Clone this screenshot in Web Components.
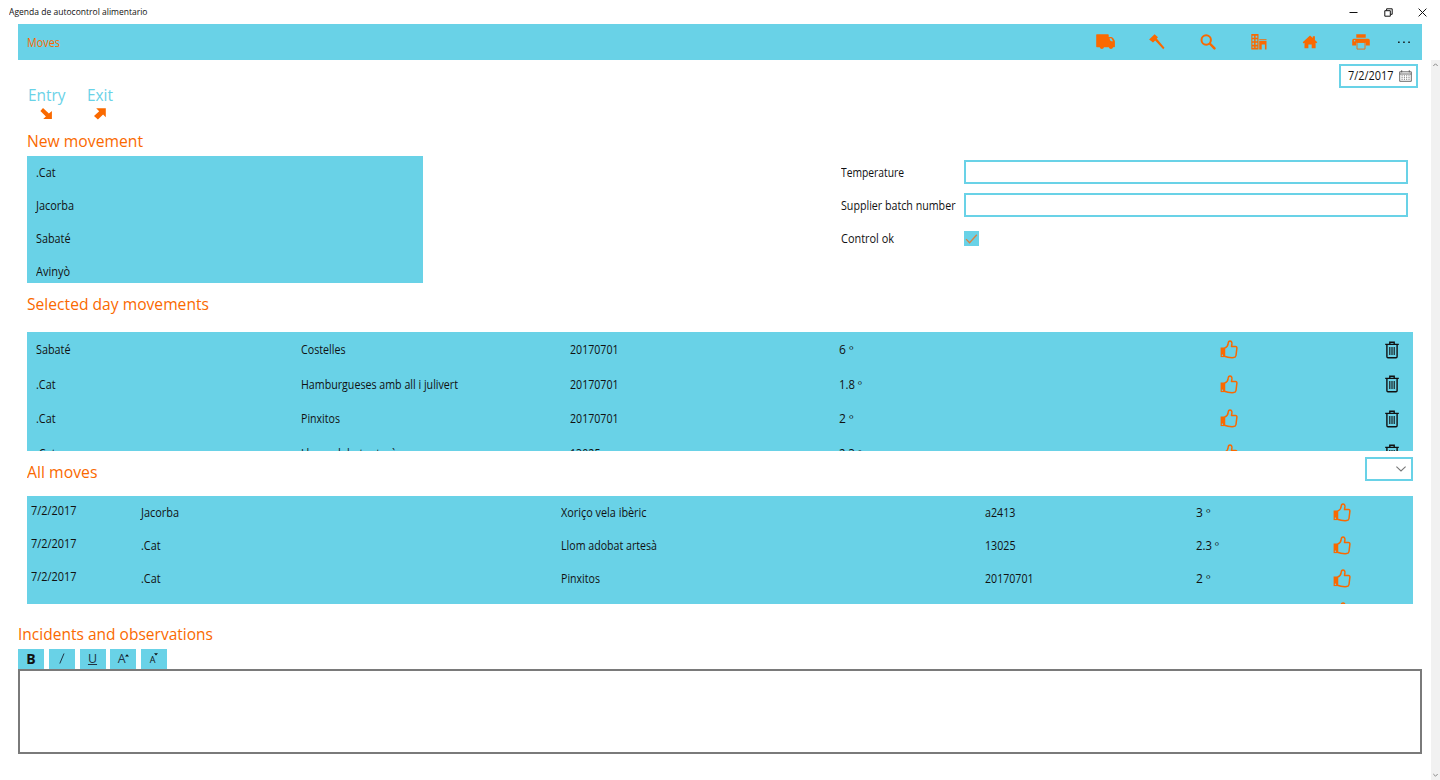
<!DOCTYPE html>
<html lang="en">
<head>
<meta charset="utf-8">
<title>Agenda de autocontrol alimentario</title>
<style>
  body {
    margin: 0;
    width: 1440px;
    height: 780px;
    overflow: hidden;
    background: #fff;
    --blue: #69d2e7;
    --orange: #fa6900;
    font-family: 'Open Sans', 'Noto Sans', sans-serif;
    font-size: 12px;
    color: #111;
  }
</style>
</head>
<body>
<moves-app></moves-app>

<script>
const ICONS = {
  truck: [19, 16, '<path fill="currentColor" d="M.8.3H12q.7 0 .7.7v2h2.6q1.3.2 2 1.3l1.2 2q.4.7.4 1.5v4.7q0 .7-.7.7h-1.1a2.2 2.2 0 0 1-4.3 0H8a2.2 2.2 0 0 1-4.3 0H.9q-.7 0-.7-.7V1Q.2.3.8.3z"/><path fill="#69d2e7" d="M13.5 4.3h1.8l1.7 2.9h-1.5q-1.2 0-1.5-1.1z"/>'],
  gavel: [16, 16, '<path fill="currentColor" d="M.1 5.6 5.6.2 9 3.2 7.7 4.6l7.8 9.1-1.3 1.5-8-8.6L4 8.6z"/>'],
  search: [16, 16, '<circle cx="6.2" cy="6" r="4.7" fill="none" stroke="currentColor" stroke-width="2"/><path stroke="currentColor" stroke-width="2.5" stroke-linecap="round" d="m10.2 10 4.3 4.4"/>'],
  building: [16, 16, '<path fill="currentColor" fill-rule="evenodd" d="M.3.1h7.2v15.5H.3zM1.4 1.8v2h1.7v-2zm3.2 0v2h1.7v-2zM1.4 5.3v2h1.7v-2zm3.2 0v2h1.7v-2zM1.4 8.8v2h1.7v-2zm3.2 0v2h1.7v-2zM1.4 12.4v1.4h1.7v-1.4zm3.2 0v1.4h1.7v-1.4zM8.2 5.2h7.3v1H8.2zM8.2 6.9h7.3v8.7h-1.6v-5h-3.2v5H8.2z"/>'],
  home: [16, 14, '<path fill="currentColor" d="m8 .6 2.8 2.5V1.3h2.1V5l2.4 2.3-1 1-.7-.5v5.5H9.7V9.6H6.4v3.7H2.5V7.8l-.8.6-1-1.1z"/>'],
  printer: [18, 16, '<path fill="currentColor" d="M4.3.3h9.4v3.5H4.3zM1.7 4.8h14.6q1.5 0 1.5 1.6v5h-4V8.7H4.2v2.7h-4v-5q0-1.6 1.5-1.6z"/><path fill="#69d2e7" stroke="currentColor" stroke-width=".9" d="M5 8.5h8v6.6H5z"/><circle cx="2.6" cy="6.8" r=".8" fill="#69d2e7"/>'],
  more: [14, 4, '<path fill="#111" d="M1.1 1.5h1.5V3H1.1zm5.1 0h1.5V3H6.2zm5.1 0h1.5V3h-1.5z"/>'],
  minimize: [9, 9, '<path stroke="#111" d="M.5 4.5h8"/>'],
  restore: [9, 9, '<path fill="none" stroke="#111" d="M.8 2.7h5.5v5.5H.8zM2.6 2.5V.8h5.6v5.5H6.5"/>'],
  close: [9, 9, '<path stroke="#111" d="m.6.6 7.8 7.8m0-7.8L.6 8.4"/>'],
  down: [15, 13, '<path fill="currentColor" d="m4 1 5.9 5.5 3-2.5v8.1H4.2l2.7-2.5L1.4 4.1z"/>'],
  up: [15, 13, '<path fill="currentColor" d="M4.2 1.2h9.6v9l-2.7-2.7-5.2 4.9-3.9-3.3 5.2-4.8z"/>'],
  calendar: [13, 12, '<path fill="none" stroke="#444" stroke-width=".8" d="M.7 1.8h11.6v9.5H.7zM.7 4h11.6M2.7.2v2.2M10.3.2v2.2"/><path stroke="#777" stroke-width=".9" stroke-dasharray="1.2 .6" d="M3.1 5.2v4.9M5.4 5.2v4.9M7.7 5.2v4.9M10 5.2v4.9"/>'],
  check: [13, 10, '<path fill="none" stroke="#d98242" stroke-width="1.3" d="m1.1 5.1 3.5 3.7 7.2-8"/>'],
  chevron: [10, 6, '<path fill="none" stroke="#777" stroke-width="1.1" d="m.4.6 4.6 4.3L9.6.6"/>'],
  thumb: [18, 19, '<path fill="none" stroke="currentColor" stroke-width="1.5" stroke-linejoin="round" d="M4.5 8.2C7 7.2 8 5.8 8.2 3.2 8.3 1.7 8.9 1 10 1c1.5 0 2 1.2 1.9 2.9l-.4 2.7h4q1.5 0 1.4 1.6l-.9 7.3q-.3 2-2.3 2.1c-3.7.2-6.2 0-9.2-1.3z"/><path fill="currentColor" d="M.6 7.5h3.8v9.6H.6z"/><circle cx="2.4" cy="15.3" r=".7" fill="#69d2e7"/>'],
  trash: [14, 18, '<path fill="none" stroke="#111" stroke-width="1.4" d="M.2 3.4h13.6M4.8 3.1V1.2h4.4v1.9M1.9 3.5v12.1q0 1.2 1.1 1.2h8q1.1 0 1.1-1.2V3.5"/><path stroke="#111" stroke-width="1.1" d="M4.8 6v8M7 6v8M9.2 6v8"/>'],
};

function define(name, html, setup) {
  const template = document.createElement('template');
  template.innerHTML = html;
  customElements.define(name, class extends HTMLElement {
    constructor() {
      super();
      this.attachShadow({ mode: 'open' });
    }

    connectedCallback() {
      this.shadowRoot.replaceChildren(template.content.cloneNode(true));
      if (setup) setup(this, this.shadowRoot);
    }
  });
}

define('ui-icon', '<style>:host { display: block; flex: none; } svg { display: block; overflow: visible; }</style>', (host, root) => {
  const [w, h, body] = ICONS[host.getAttribute('name')];
  root.innerHTML += `<svg width="${w}" height="${h}" viewBox="0 0 ${w} ${h}">${body}</svg>`;
});

// Text label, condensed to the width given in "w"
define('ui-text', `
  <style>
    :host { display: block; flex: none; white-space: nowrap; line-height: 16px; }
    span { display: inline-block; transform-origin: 0 50%; }
  </style>
  <span></span>`, (host, root) => {
  const span = root.querySelector('span');
  span.textContent = host.getAttribute('text');
  const w = parseFloat(host.getAttribute('w'));
  if (w) {
    const natural = span.getBoundingClientRect().width;
    span.style.transform = `scaleX(${w / natural})`;
    host.style.width = w + 'px';
  }
});

define('title-bar', `
  <style>
    :host { display: flex; align-items: center; height: 24px; padding: 0 13px 0 9px; font-size: 9px; }
    .buttons { display: flex; gap: 25.5px; margin-left: auto; }
  </style>
  <ui-text text="Agenda de autocontrol alimentario" w="138.5"></ui-text>
  <div class="buttons">
    <ui-icon name="minimize"></ui-icon>
    <ui-icon name="restore"></ui-icon>
    <ui-icon name="close"></ui-icon>
  </div>`);

define('command-bar', `
  <style>
    :host { display: flex; align-items: center; height: 36px; margin: 0 18px; padding-left: 9px; box-sizing: border-box; background: var(--blue); color: var(--orange); }
    ui-text { padding-top: 2px; }
    .icons { display: grid; grid-template-columns: repeat(6, 51px) 35px; place-items: center; margin-left: auto; margin-right: 1px; }
  </style>
  <ui-text text="Moves" w="33"></ui-text>
  <div class="icons">
    <ui-icon name="truck"></ui-icon>
    <ui-icon name="gavel"></ui-icon>
    <ui-icon name="search"></ui-icon>
    <ui-icon name="building"></ui-icon>
    <ui-icon name="home"></ui-icon>
    <ui-icon name="printer"></ui-icon>
    <ui-icon name="more"></ui-icon>
  </div>`);

define('scroll-bar', `
  <style>
    :host { display: flex; flex: none; flex-direction: column; justify-content: space-between; align-items: center; width: 9px; padding: 3px 0; box-sizing: border-box; background: #f1f1f1; }
    svg { display: block; fill: none; stroke: #888; }
  </style>
  <svg width="5" height="4"><path d="m.3 3 2.2-2.2L4.7 3"/></svg>
  <svg width="5" height="4"><path d="m.3 1 2.2 2.2L4.7 1"/></svg>`);

define('section-title', `
  <style>
    :host { display: block; color: var(--orange); font-size: 16.8px; }
    ui-text { line-height: 22px; }
  </style>
  <div></div>`, (host, root) => {
  root.querySelector('div').innerHTML =
    `<ui-text text="${host.getAttribute('text')}" w="${host.getAttribute('w')}"></ui-text>`;
});

define('move-tab', `
  <style>
    :host { display: flex; flex-direction: column; align-items: center; gap: 1px; color: var(--blue); font-size: 16.5px; }
    ::slotted(ui-icon) { color: var(--orange); }
  </style>
  <slot></slot><slot name="arrow"></slot>`);

const LISTS = {
  suppliers: {
    columns: '1fr', height: 33, pad: 9,
    rows: [[['.Cat', 19.5]], [['Jacorba', 38]], [['Sabaté', 34.5]], [['Avinyò', 34]]],
  },
  // icon columns are sized so that each icon sits on its column centre
  day: {
    columns: '264.5px 269.5px 269px 325px 130px 196px', height: 34.5, pad: 9,
    rows: [
      [['Sabaté', 34.5], ['Costelles', 44.5], ['20170701', 48.5], ['6 º', 14.5], 'thumb', 'trash'],
      [['.Cat', 19.5], ['Hamburgueses amb all i julivert', 157], ['20170701', 48.5], ['1.8 º', 23], 'thumb', 'trash'],
      [['.Cat', 19.5], ['Pinxitos', 39], ['20170701', 48.5], ['2 º', 14.5], 'thumb', 'trash'],
      [['.Cat', 19.5], ['Llom adobat artesà', 96], ['13025', 30.5], ['2.3 º', 23], 'thumb', 'trash'],
    ],
  },
  all: {
    columns: '110px 419.5px 424px 211.5px 81px 130px', height: 33, pad: 4,
    rows: [
      [['7/2/2017', 45.5, 'date'], ['Jacorba', 38], ['Xoriço vela ibèric', 85.5], ['a2413', 30.5], ['3 º', 14.5], 'thumb'],
      [['7/2/2017', 45.5, 'date'], ['.Cat', 19.5], ['Llom adobat artesà', 96], ['13025', 30.5], ['2.3 º', 23], 'thumb'],
      [['7/2/2017', 45.5, 'date'], ['.Cat', 19.5], ['Pinxitos', 39], ['20170701', 48.5], ['2 º', 14.5], 'thumb'],
      [['', 0], ['', 0], ['', 0], ['', 0], ['', 0], 'thumb'],
    ],
  },
};

define('move-list', `
  <style>
    :host { display: block; overflow: hidden; background: var(--blue); }
    .row { display: grid; align-items: center; }
    ui-text { padding-top: 1px; }
    ui-icon { justify-self: center; }
    ui-icon[name=thumb] { color: var(--orange); }
    .date { margin-bottom: 3px; }
  </style>`, (host, root) => {
  const { columns, height, rows, pad } = LISTS[host.getAttribute('kind')];
  root.innerHTML += rows.map(cells => `
    <div class="row" style="grid-template-columns: ${columns}; height: ${height}px; padding-left: ${pad}px">
      ${cells.map(cell => typeof cell === 'string'
        ? `<ui-icon name="${cell}"></ui-icon>`
        : `<ui-text class="${cell[2] || ''}" text="${cell[0]}" w="${cell[1]}"></ui-text>`).join('')}
    </div>`).join('');
});

define('movement-form', `
  <style>
    :host { display: grid; grid-template-columns: 123.5px 444px; grid-auto-rows: 33px; align-items: center; }
    ui-text { padding-top: 1px; }
    .input { height: 24px; margin-bottom: 1px; box-sizing: border-box; border: 2px solid var(--blue); background: #fff; }
    .check { display: grid; place-items: center; width: 15px; height: 15px; background: var(--blue); }
  </style>
  <ui-text text="Temperature" w="63"></ui-text><div class="input"></div>
  <ui-text text="Supplier batch number" w="114.5"></ui-text><div class="input"></div>
  <ui-text text="Control ok" w="53"></ui-text><div class="check"><ui-icon name="check"></ui-icon></div>`);

define('date-picker', `
  <style>
    :host { display: flex; align-items: center; justify-content: space-between; width: 79px; height: 24px; padding: 0 4px 0 7px; box-sizing: border-box; border: 2px solid var(--blue); }
  </style>
  <ui-text text="7/2/2017" w="45.5"></ui-text>
  <ui-icon name="calendar"></ui-icon>`);

define('filter-select', `
  <style>
    :host { display: flex; align-items: center; justify-content: flex-end; width: 48px; height: 24px; padding-right: 5px; box-sizing: border-box; border: 2px solid var(--blue); }
  </style>
  <ui-icon name="chevron"></ui-icon>`);

define('text-editor', `
  <style>
    :host { display: block; }
    .tools { display: flex; gap: 4.75px; }
    .tool { display: flex; align-items: center; justify-content: center; width: 26px; height: 20px; box-sizing: border-box; background: var(--blue); line-height: 20px; font-size: 13px; color: #111; }
    .bold { font-weight: 700; font-size: 14px; }
    .light { font-size: 12.5px; color: #234; }
    .small { font-size: 9px; padding-top: 2px; }
    .tri { margin: -7px 0 0 -1px; }
    .small .tri { margin-top: -11px; }
    .area { height: 85px; box-sizing: border-box; border: 2px solid #7a7a7a; background: #fff; }
  </style>
  <div class="tools">
    <div class="tool bold">B</div>
    <div class="tool"><svg width="6" height="11"><path stroke="#234" d="M.8 10.5 5 .5"/></svg></div>
    <div class="tool light"><u>U</u></div>
    <div class="tool light">A<svg class="tri" width="4" height="3"><path fill="#111" d="M0 2.5 2 .3l2 2.2z"/></svg></div>
    <div class="tool small">A<svg class="tri" width="4" height="3"><path fill="#111" d="M0 .3h4L2 2.5z"/></svg></div>
  </div>
  <div class="area"></div>`);

define('moves-app', `
  <style>
    :host { display: flex; flex-direction: column; height: 780px; }
    .body { display: flex; flex: 1; min-height: 0; }
    .page { flex: 1; min-width: 0; padding: 5px 9px 0 18px; }
    .top { display: flex; justify-content: space-between; align-items: flex-start; height: 65px; padding: 0 4.5px 0 10px; }
    date-picker { margin-top: -1px; }
    .tabs { display: flex; gap: 21px; padding-top: 19px; }
    .tabs ui-text { line-height: 22px; }
    .main { padding: 0 9px; }
    .new { display: flex; justify-content: space-between; height: 127px; margin-top: 4px; }
    move-list[kind=suppliers] { width: 396px; height: 127px; }
    movement-form { margin-right: 5px; height: 99px; }
    .day-title { padding-top: 10px; height: 39.4px; }
    move-list[kind=day] { height: 118.2px; }
    .all-title { display: flex; justify-content: space-between; align-items: flex-start; height: 39.4px; }
    .all-title section-title { padding-top: 10px; }
    filter-select { margin-top: 6.4px; }
    move-list[kind=all] { height: 108.5px; margin-top: 6px; }
    .notes { padding-top: 18.5px; }
    text-editor { margin-top: 4px; }
  </style>
  <title-bar></title-bar>
  <command-bar></command-bar>
  <div class="body">
    <div class="page">
      <div class="top">
        <div class="tabs">
          <move-tab><ui-text text="Entry" w="37.5"></ui-text><ui-icon slot="arrow" name="down"></ui-icon></move-tab>
          <move-tab><ui-text text="Exit" w="26"></ui-text><ui-icon slot="arrow" name="up"></ui-icon></move-tab>
        </div>
        <date-picker></date-picker>
      </div>
      <div class="main">
        <section-title text="New movement" w="116"></section-title>
        <div class="new">
          <move-list kind="suppliers"></move-list>
          <movement-form></movement-form>
        </div>
        <section-title class="day-title" text="Selected day movements" w="182"></section-title>
        <move-list kind="day"></move-list>
        <div class="all-title">
          <section-title text="All moves" w="70.5"></section-title>
          <filter-select></filter-select>
        </div>
        <move-list kind="all"></move-list>
      </div>
      <section-title class="notes" text="Incidents and observations" w="195"></section-title>
      <text-editor></text-editor>
    </div>
    <scroll-bar></scroll-bar>
  </div>`);
</script>
</body>
</html>
